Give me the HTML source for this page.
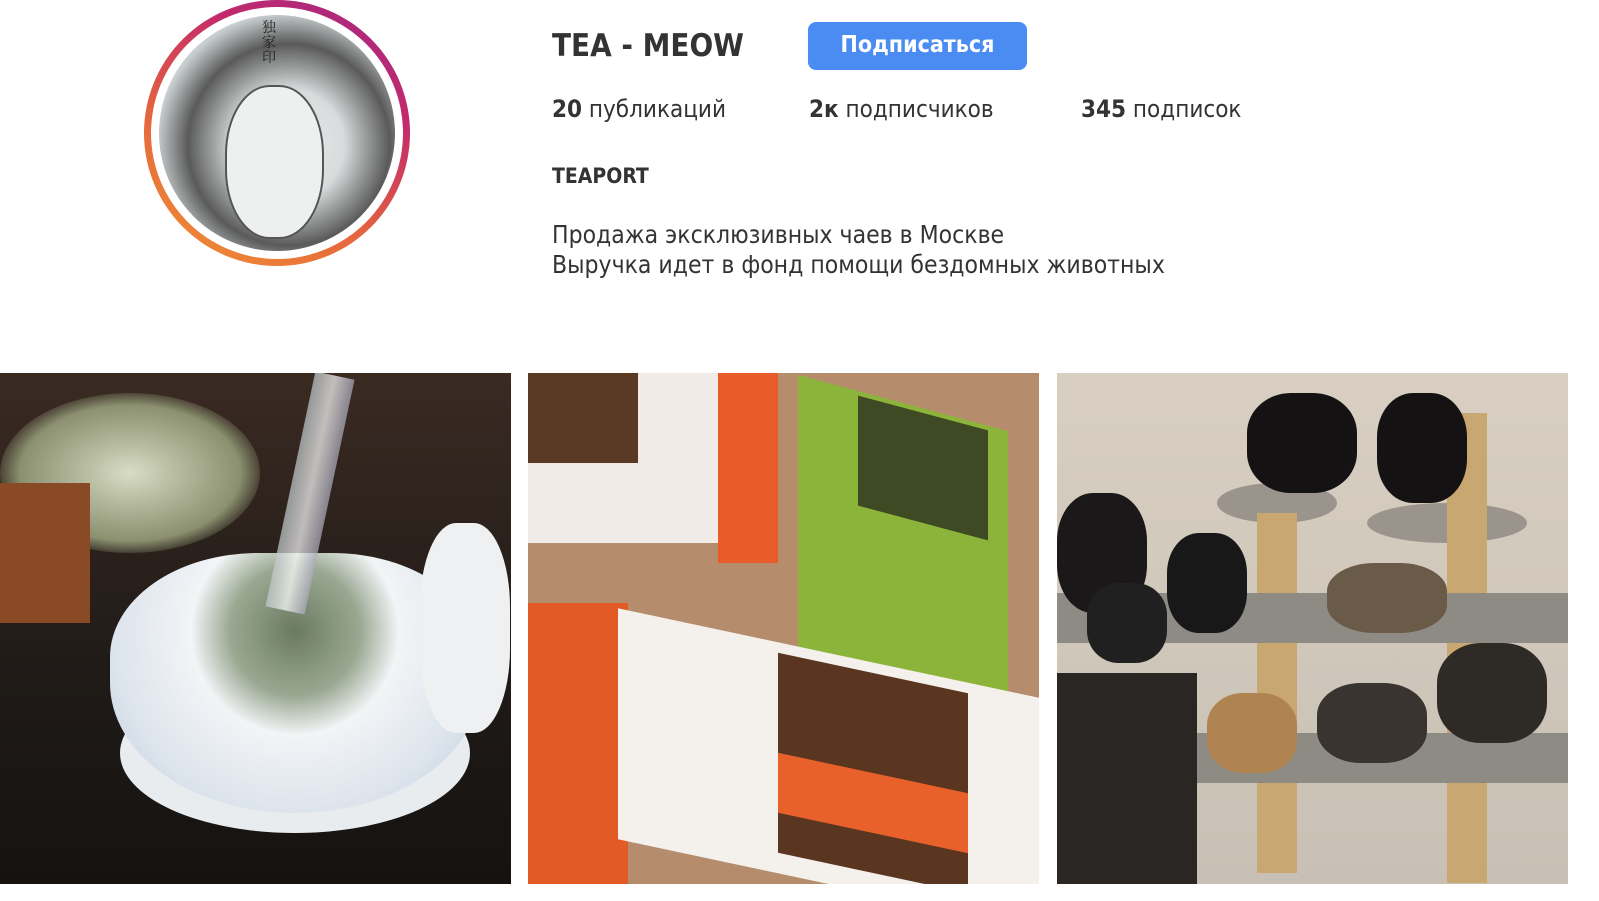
<!DOCTYPE html>
<html><head><meta charset="utf-8"><style>
body{margin:0;width:1599px;height:901px;background:#fff;position:relative;overflow:hidden;font-family:"DejaVu Sans Condensed","Liberation Sans",sans-serif;color:#333}
.a{position:absolute}
.t{white-space:nowrap}
</style></head><body>
<div class="a" style="left:144px;top:0;width:266px;height:266px;border-radius:50%;background:linear-gradient(30deg,#f09433,#e6683c 35%,#c32a6a 70%,#a0288a)"></div>
<div class="a" style="left:151px;top:7px;width:252px;height:252px;border-radius:50%;background:#fff"></div>
<div class="a" style="left:159px;top:15px;width:236px;height:236px;border-radius:50%;background:radial-gradient(circle at 55% 55%,#e8eaea 0,#d8dcdc 30%,#5a5a5a 55%,#c9cfd0 72%,#b8c1c4 100%)"></div>
<div class="a" style="left:225px;top:85px;width:95px;height:150px;border-radius:45%;background:#eef0f0;border:2px solid #555"></div>
<div class="a t" style="left:262px;top:20px;font-size:14px;line-height:15px;width:16px;color:#222;font-family:'Noto Serif CJK SC',serif">独<br>家<br>印</div>
<div class="a t" style="left:552px;top:28px;font-size:31px;font-weight:bold;color:#333">TEA - MEOW</div>
<div class="a t" style="left:808px;top:22px;width:219px;height:48px;border-radius:8px;background:#4a8cf2;color:#fff;font-size:23px;font-weight:bold;text-align:center;line-height:46px">Подписаться</div>
<div class="a t" style="left:552px;top:95px;font-size:24px"><b>20</b> публикаций</div>
<div class="a t" style="left:809px;top:95px;font-size:24px"><b>2к</b> подписчиков</div>
<div class="a t" style="left:1081px;top:95px;font-size:24px"><b>345</b> подписок</div>
<div class="a t" style="left:552px;top:164px;font-size:21px;font-weight:bold">TEAPORT</div>
<div class="a t" style="left:552px;top:220px;font-size:24.5px;line-height:30px">Продажа эксклюзивных чаев в Москве<br>Выручка идет в фонд помощи бездомных животных</div>

<div class="a" style="left:0;top:373px;width:511px;height:511px;overflow:hidden;background:linear-gradient(180deg,#3a2a22 0,#1f1a17 60%,#151210 100%)">
 <div class="a" style="left:0;top:20px;width:260px;height:160px;border-radius:50%;background:radial-gradient(#d8dcc4,#8a9070 60%,transparent 75%)"></div>
 <div class="a" style="left:0;top:110px;width:90px;height:140px;background:#8a4a26"></div>
 <div class="a" style="left:120px;top:300px;width:350px;height:160px;border-radius:50%;background:#e8ecee"></div>
 <div class="a" style="left:110px;top:180px;width:370px;height:260px;border-radius:40% 40% 50% 50%;background:radial-gradient(circle at 50% 30%,#6a7a60 0,#9aa892 25%,#f2f4f6 40%,#dde4ec 70%,#b8c8de 100%)"></div>
 <div class="a" style="left:420px;top:150px;width:90px;height:210px;border-radius:40%;background:#eef0f2"></div>
 <div class="a" style="left:290px;top:0;width:40px;height:240px;background:linear-gradient(90deg,#bfc8cc,#fff,#aab);transform:rotate(12deg);opacity:.7"></div>
</div>

<div class="a" style="left:528px;top:373px;width:511px;height:511px;overflow:hidden;background:#b58c6c">
 <div class="a" style="left:0;top:0;width:250px;height:170px;background:#f0ebe6"></div>
 <div class="a" style="left:0;top:0;width:110px;height:90px;background:#5a3a22"></div>
 <div class="a" style="left:190px;top:0;width:60px;height:190px;background:#e85c2a"></div>
 <div class="a" style="left:270px;top:30px;width:210px;height:290px;background:#8cb43a;transform:skewY(15deg)"></div>
 <div class="a" style="left:330px;top:40px;width:130px;height:110px;background:#3e4a24;transform:skewY(15deg)"></div>
 <div class="a" style="left:0;top:230px;width:100px;height:281px;background:#e25a26"></div>
 <div class="a" style="left:90px;top:280px;width:421px;height:231px;background:#f4f0ec;transform:skewY(12deg)"></div>
 <div class="a" style="left:250px;top:300px;width:190px;height:200px;background:#5a3620;transform:skewY(12deg)"></div>
 <div class="a" style="left:250px;top:400px;width:190px;height:60px;background:#e8602a;transform:skewY(12deg)"></div>
</div>

<div class="a" style="left:1057px;top:373px;width:511px;height:511px;overflow:hidden;background:linear-gradient(180deg,#d8cfc2 0,#c8c0b4 100%)">
 <div class="a" style="left:160px;top:110px;width:120px;height:40px;border-radius:50%;background:#9a948c"></div>
 <div class="a" style="left:310px;top:130px;width:160px;height:40px;border-radius:50%;background:#9a948c"></div>
 <div class="a" style="left:200px;top:140px;width:40px;height:360px;background:#c8a870"></div>
 <div class="a" style="left:390px;top:40px;width:40px;height:470px;background:#c8a870"></div>
 <div class="a" style="left:0;top:220px;width:511px;height:50px;background:#8e8a84"></div>
 <div class="a" style="left:0;top:360px;width:511px;height:50px;background:#8e8a84"></div>
 <div class="a" style="left:190px;top:20px;width:110px;height:100px;border-radius:40%;background:#141212"></div>
 <div class="a" style="left:320px;top:20px;width:90px;height:110px;border-radius:40%;background:#141212"></div>
 <div class="a" style="left:0;top:120px;width:90px;height:120px;border-radius:40%;background:#1a1818"></div>
 <div class="a" style="left:30px;top:210px;width:80px;height:80px;border-radius:40%;background:#202020"></div>
 <div class="a" style="left:110px;top:160px;width:80px;height:100px;border-radius:40%;background:#181818"></div>
 <div class="a" style="left:270px;top:190px;width:120px;height:70px;border-radius:40%;background:#6a5a48"></div>
 <div class="a" style="left:0;top:300px;width:140px;height:211px;background:#2a2624"></div>
 <div class="a" style="left:150px;top:320px;width:90px;height:80px;border-radius:40%;background:#b08450"></div>
 <div class="a" style="left:260px;top:310px;width:110px;height:80px;border-radius:40%;background:#3a3430"></div>
 <div class="a" style="left:380px;top:270px;width:110px;height:100px;border-radius:40%;background:#2e2a26"></div>
</div>
</body></html>
